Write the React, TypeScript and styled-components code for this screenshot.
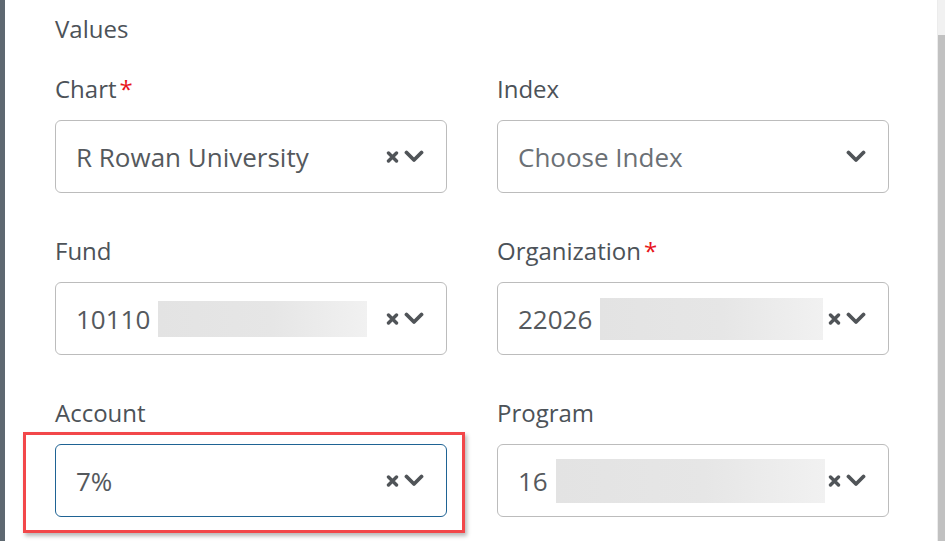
import styled, { createGlobalStyle } from "styled-components";

const GlobalStyle = createGlobalStyle`
  html, body {
    margin: 0;
    padding: 0;
    background: #ffffff;
  }
  body {
    font-family: "Open Sans", "Noto Sans", sans-serif;
  }
`;

const Page = styled.div`
  display: flex;
  width: 945px;
  height: 541px;
  overflow: hidden;
`;

const Backdrop = styled.div`
  width: 5px;
  flex: 0 0 5px;
  background: #5e6871;
`;

const Panel = styled.section`
  flex: 1;
  background: #ffffff;
  padding: 13px 0 0 50px;
`;

const Scrollbar = styled.div`
  width: 7px;
  flex: 0 0 7px;
  display: flex;
  flex-direction: column;
  background: #f1f1f1;
  border-left: 1px solid #ececec;
`;

const Thumb = styled.div`
  margin-top: 35px;
  flex: 1;
  background: #c1c1c1;
`;

const Heading = styled.h3`
  margin: 0 0 28px;
  font-size: 24px;
  line-height: 32px;
  font-weight: 400;
  color: #4c5258;
`;

const Grid = styled.div`
  display: grid;
  grid-template-columns: 392px 392px;
  column-gap: 50px;
  row-gap: 42px;
`;

const Field = styled.div`
  display: flex;
  flex-direction: column;
`;

const Label = styled.label`
  font-size: 24px;
  line-height: 32px;
  margin-bottom: 15px;
  color: #4c5258;
`;

const Required = styled.span`
  color: #e8141b;
  margin-left: 3px;
`;

const Control = styled.div`
  position: relative;
`;

const Box = styled.div<{ $focused?: boolean }>`
  box-sizing: border-box;
  height: 73px;
  display: flex;
  align-items: center;
  padding: 0 22px 0 20px;
  border: 1px solid ${({ $focused }) => ($focused ? "#1f6394" : "#bcbcbc")};
  border-radius: 6px;
  background: #ffffff;
`;

const Value = styled.div<{ $placeholder?: boolean }>`
  flex: 1;
  display: flex;
  align-items: center;
  font-size: 26px;
  color: ${({ $placeholder }) => ($placeholder ? "#6b7075" : "#55595d")};
`;

const Redacted = styled.span<{ $h: number }>`
  display: inline-block;
  height: ${({ $h }) => $h}px;
  margin-left: 8px;
  background: linear-gradient(90deg, #e3e3e3 0%, #e6e6e6 55%, #f1f1f1 100%);
`;

const Indicators = styled.div`
  display: flex;
  align-items: center;
  gap: 5px;
  color: #505458;
`;

const Highlight = styled.div`
  position: absolute;
  top: -12px;
  left: -32px;
  right: -18px;
  bottom: -16px;
  border: 3px solid #f2474a;
  box-shadow: 2px 3px 4px rgba(0, 0, 0, 0.28);
  pointer-events: none;
`;

const ClearIcon = () => (
  <svg width="13" height="12" viewBox="0 0 13 12">
    <path
      d="M2.5 2 L10.5 10 M10.5 2 L2.5 10"
      stroke="currentColor"
      strokeWidth="3.4"
      strokeLinecap="round"
    />
  </svg>
);

const ChevronIcon = () => (
  <svg width="20" height="13" viewBox="0 0 20 13">
    <path
      d="M2.5 2.5 L10 10 L17.5 2.5"
      stroke="currentColor"
      strokeWidth="3.8"
      fill="none"
      strokeLinecap="round"
      strokeLinejoin="round"
    />
  </svg>
);

interface FieldData {
  label: string;
  required?: boolean;
  value: string;
  placeholder?: boolean;
  clearable?: boolean;
  focused?: boolean;
  highlighted?: boolean;
  redact?: { width: number; height: number };
}

const fields: FieldData[] = [
  { label: "Chart", required: true, value: "R Rowan University", clearable: true },
  { label: "Index", value: "Choose Index", placeholder: true },
  { label: "Fund", value: "10110", clearable: true, redact: { width: 209, height: 36 } },
  {
    label: "Organization",
    required: true,
    value: "22026",
    clearable: true,
    redact: { width: 223, height: 42 },
  },
  { label: "Account", value: "7%", clearable: true, focused: true, highlighted: true },
  { label: "Program", value: "16", clearable: true, redact: { width: 269, height: 44 } },
];

const App = () => {
  return (
    <>
      <GlobalStyle />
      <Page>
        <Backdrop />
        <Panel>
          <Heading>Values</Heading>
          <Grid>
            {fields.map((f) => (
              <Field key={f.label}>
                <Label>
                  {f.label}
                  {f.required && <Required>*</Required>}
                </Label>
                <Control>
                  {f.highlighted && <Highlight />}
                  <Box $focused={f.focused}>
                    <Value $placeholder={f.placeholder}>
                      {f.value}
                      {f.redact && (
                        <Redacted $h={f.redact.height} style={{ width: f.redact.width }} />
                      )}
                    </Value>
                    <Indicators>
                      {f.clearable && <ClearIcon />}
                      <ChevronIcon />
                    </Indicators>
                  </Box>
                </Control>
              </Field>
            ))}
          </Grid>
        </Panel>
        <Scrollbar>
          <Thumb />
        </Scrollbar>
      </Page>
    </>
  );
};

export default App;
